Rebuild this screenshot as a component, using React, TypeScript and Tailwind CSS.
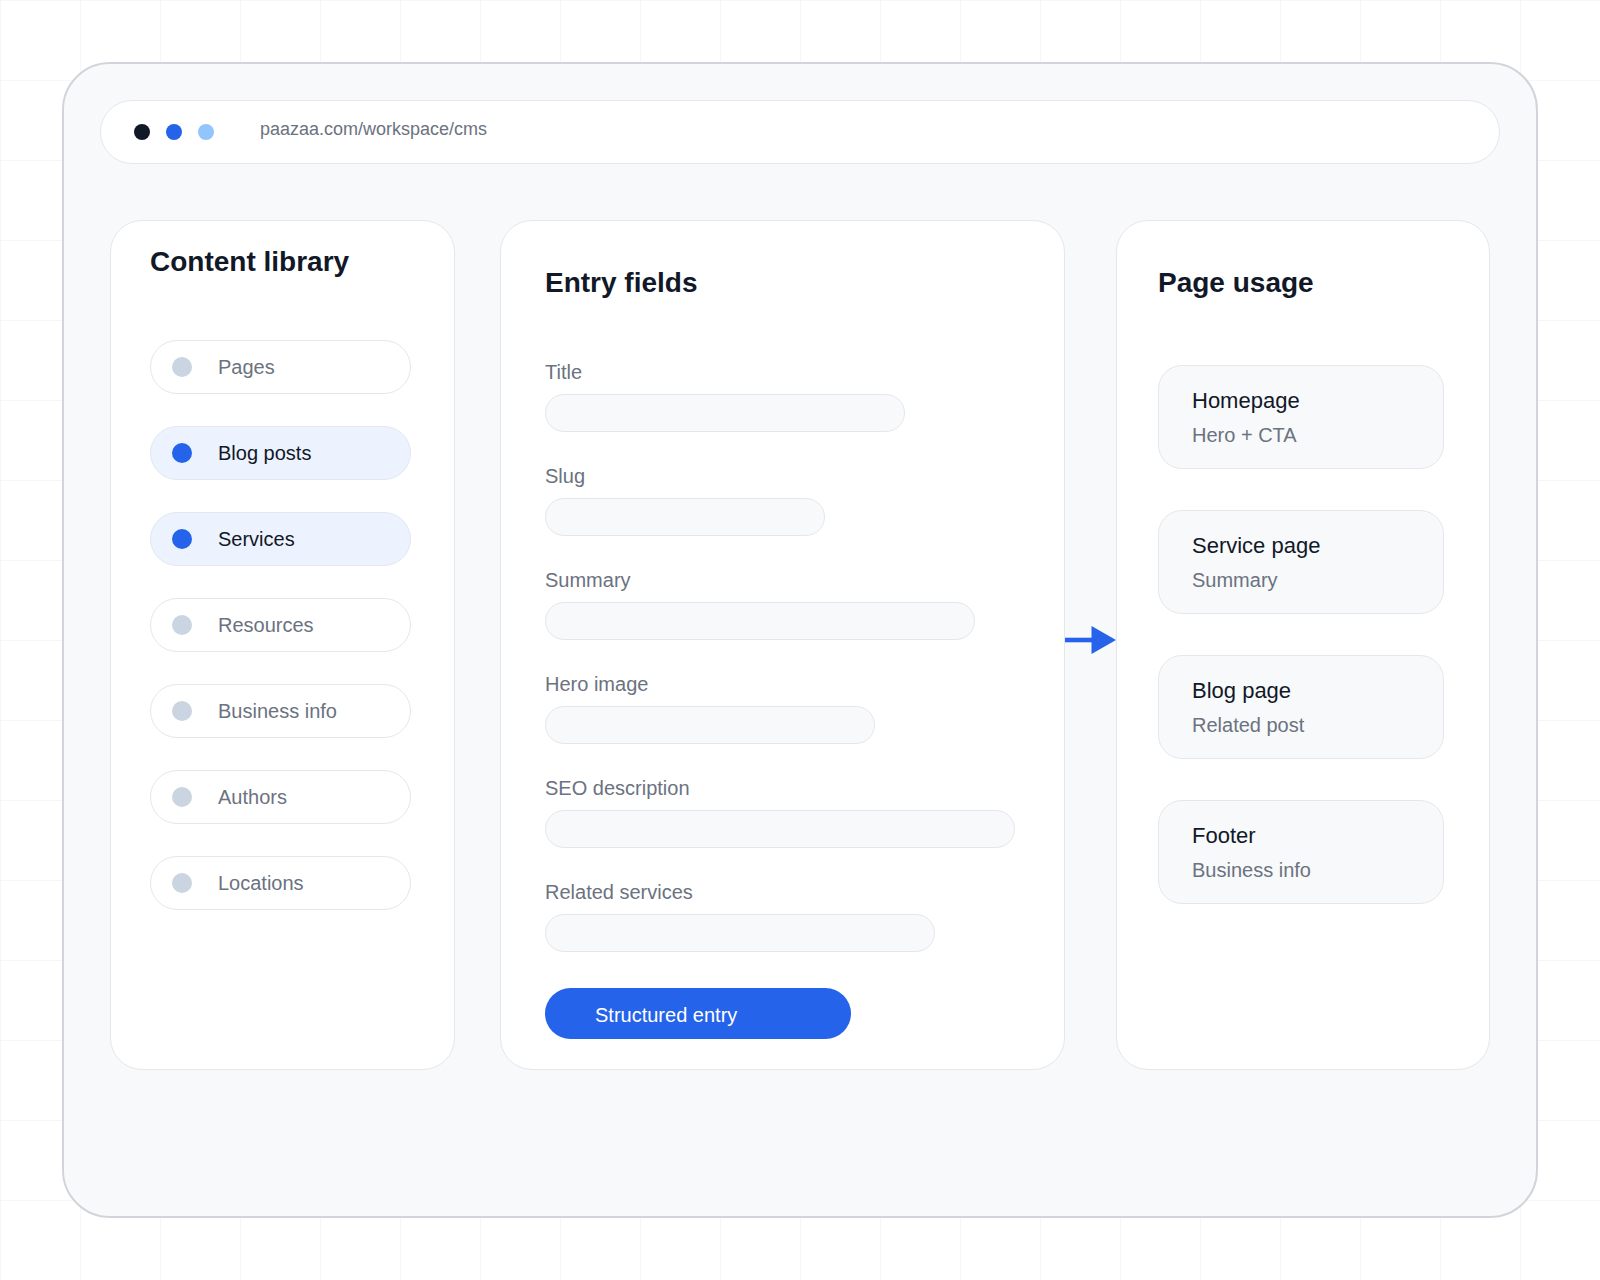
import React from "react";

const libraryItems = [
  { label: "Pages", active: false },
  { label: "Blog posts", active: true },
  { label: "Services", active: true },
  { label: "Resources", active: false },
  { label: "Business info", active: false },
  { label: "Authors", active: false },
  { label: "Locations", active: false },
];

const fields = [
  { label: "Title", w: "w-[360px]" },
  { label: "Slug", w: "w-[280px]" },
  { label: "Summary", w: "w-[430px]" },
  { label: "Hero image", w: "w-[330px]" },
  { label: "SEO description", w: "w-[470px]" },
  { label: "Related services", w: "w-[390px]" },
];

const usages = [
  { title: "Homepage", sub: "Hero + CTA" },
  { title: "Service page", sub: "Summary" },
  { title: "Blog page", sub: "Related post" },
  { title: "Footer", sub: "Business info" },
];

export default function App() {
  return (
    <div className="w-[1600px] h-[1280px] p-[62px] bg-white bg-[image:linear-gradient(to_right,#f5f6f8_1px,transparent_1px),linear-gradient(to_bottom,#f5f6f8_1px,transparent_1px)] bg-[size:80px_80px] font-['Liberation_Sans',Arial,sans-serif]">
      <div className="h-[1156px] rounded-[48px] border-2 border-[#d1d5db] bg-[#f8f9fb] px-[36px] pt-[36px]">
        {/* URL bar */}
        <div className="h-[64px] rounded-full border border-[#e5e7eb] bg-white flex items-center pl-[33px]">
          <div className="flex gap-4">
            <span className="w-4 h-4 rounded-full bg-[#111827]" />
            <span className="w-4 h-4 rounded-full bg-[#2563eb]" />
            <span className="w-4 h-4 rounded-full bg-[#93c5fd]" />
          </div>
          <span className="ml-[46px] mb-[6px] text-[18px] leading-6 text-[#6b7280]">
            paazaa.com/workspace/cms
          </span>
        </div>

        {/* Panels */}
        <div className="mt-[56px] mx-[10px] flex h-[850px]">
          {/* Content library */}
          <div className="w-[345px] shrink-0 rounded-[32px] border border-[#e5e7eb] bg-white pl-[39px] pt-6">
            <h2 className="text-[28px] leading-[34px] font-bold text-[#111827]">Content library</h2>
            <div className="mt-[61px] flex flex-col gap-8">
              {libraryItems.map((it) => (
                <div
                  key={it.label}
                  className={
                    it.active
                      ? "w-[261px] h-[54px] rounded-full border border-[#e2e8f0] bg-[#edf3fe] flex items-center pl-[21px]"
                      : "w-[261px] h-[54px] rounded-full border border-[#e5e7eb] bg-white flex items-center pl-[21px]"
                  }
                >
                  <span
                    className={
                      it.active
                        ? "w-5 h-5 rounded-full bg-[#2563eb]"
                        : "w-5 h-5 rounded-full bg-[#cbd5e1]"
                    }
                  />
                  <span
                    className={
                      it.active
                        ? "ml-[26px] text-[20px] leading-6 text-[#111827]"
                        : "ml-[26px] text-[20px] leading-6 text-[#6b7280]"
                    }
                  >
                    {it.label}
                  </span>
                </div>
              ))}
            </div>
          </div>

          {/* Entry fields */}
          <div className="ml-[45px] w-[565px] shrink-0 rounded-[32px] border border-[#e5e7eb] bg-white pl-[44px] pt-[45px]">
            <h2 className="text-[28px] leading-[34px] font-bold text-[#111827]">Entry fields</h2>
            <div className="mt-[60px] flex flex-col gap-8">
              {fields.map((f) => (
                <div key={f.label} className="flex flex-col">
                  <span className="text-[20px] leading-6 text-[#6b7280]">{f.label}</span>
                  <div className={"mt-[10px] h-[38px] rounded-full border border-[#e5e7eb] bg-[#f8f9fb] " + f.w} />
                </div>
              ))}
            </div>
            <div className="mt-[36px] w-[306px] h-[51px] rounded-full bg-[#2563eb] flex items-center pl-[50px] pt-[2px] text-[20px] leading-6 text-white">
              Structured entry
            </div>
          </div>

          {/* Arrow */}
          <div className="w-[51px] shrink-0 flex items-center">
            <svg width="51" height="28" viewBox="0 0 51 28" className="mb-[10px]">
              <rect x="0" y="11.7" width="28" height="4.6" fill="#2563eb" />
              <polygon points="26.5,0 51,14 26.5,28" fill="#2563eb" />
            </svg>
          </div>

          {/* Page usage */}
          <div className="w-[374px] shrink-0 rounded-[32px] border border-[#e5e7eb] bg-white pl-[41px] pt-[45px]">
            <h2 className="text-[28px] leading-[34px] font-bold text-[#111827]">Page usage</h2>
            <div className="mt-[65px] flex flex-col gap-[41px]">
              {usages.map((u) => (
                <div
                  key={u.title}
                  className="w-[286px] h-[104px] rounded-3xl border border-[#e5e7eb] bg-[#f8f9fb] px-[33px] py-[21px]"
                >
                  <div className="text-[22px] leading-[28px] text-[#111827]">{u.title}</div>
                  <div className="mt-2 text-[20px] leading-6 text-[#6b7280]">{u.sub}</div>
                </div>
              ))}
            </div>
          </div>
        </div>
      </div>
    </div>
  );
}
